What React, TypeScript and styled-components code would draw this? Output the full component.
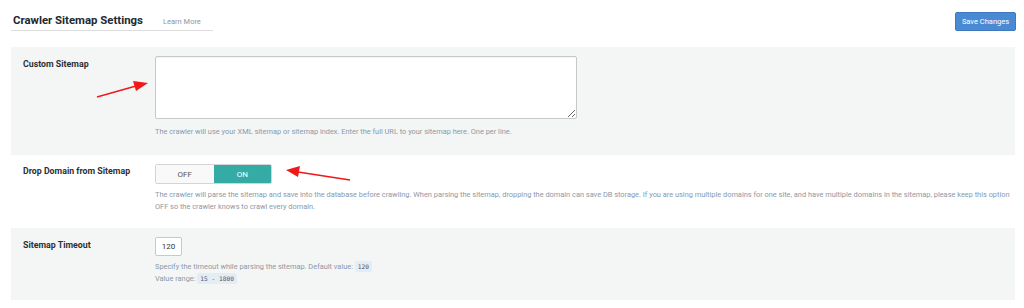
import * as React from "react";
import styled, { createGlobalStyle } from "styled-components";

const GlobalStyle = createGlobalStyle`
  body {
    margin: 0;
    background: #fff;
    font-family: Roboto, "Open Sans", sans-serif;
    color: #333;
  }
`;

export const Page = styled.div`
  width: 1024px;
  height: 308px;
  padding: 0 9px 0 11px;
  box-sizing: border-box;
  position: relative;
  overflow: hidden;
`;

export const Header = styled.div`
  display: flex;
  align-items: flex-end;
  justify-content: space-between;
  height: 31px;
`;

export const TitleBlock = styled.div`
  display: flex;
  align-items: baseline;
  gap: 20px;
  width: 202px;
  padding: 0 0 3px 2px;
  border-bottom: 1px solid #dcdcdc;
  box-sizing: border-box;
`;

export const Title = styled.h1`
  margin: 0;
  font-size: 11.4px;
  font-weight: 700;
  color: #23282d;
`;

export const LearnMore = styled.a`
  font-size: 7.5px;
  color: #8a99a8;
  text-decoration: none;
`;

export const SaveButton = styled.button`
  width: 61px;
  height: 19px;
  margin-right: -1px;
  background: #4a8ad4;
  border: 1px solid #3f78bb;
  border-radius: 2px;
  color: #fff;
  font-family: inherit;
  font-size: 7.5px;
  padding: 0;
`;

export const Table = styled.div`
  margin-top: 16px;
  display: flex;
  flex-direction: column;
`;

export const Row = styled.div<{ $striped?: boolean; $h: number }>`
  display: grid;
  grid-template-columns: 144px 1fr;
  height: ${(p) => p.$h}px;
  background: ${(p) => (p.$striped ? "#f4f6f6" : "#fff")};
  box-sizing: border-box;
`;

export const Label = styled.div<{ $top: number }>`
  padding: ${(p) => p.$top}px 0 0 12px;
  font-size: 8.8px;
  font-weight: 700;
  color: #2c3035;
`;

export const Field = styled.div<{ $top: number }>`
  padding-top: ${(p) => p.$top}px;
  display: flex;
  flex-direction: column;
  align-items: flex-start;
`;

export const TextArea = styled.textarea`
  width: 422px;
  height: 63px;
  box-sizing: border-box;
  border: 1px solid #c8c8c8;
  border-radius: 2px;
  background: #fff;
  box-shadow: inset 0 1px 1px rgba(0, 0, 0, 0.05);
  margin: 0;
`;

export const Desc = styled.p<{ $top: number }>`
  margin: ${(p) => p.$top}px 0 0;
  font-size: 7.4px;
  line-height: 12px;
  color: #8a99a8;
  white-space: nowrap;
`;

export const Toggle = styled.div`
  display: flex;
  width: 117px;
  height: 20px;
  border: 1px solid #d4d4d4;
  border-radius: 2px;
  overflow: hidden;
  box-sizing: border-box;
`;

export const ToggleOption = styled.div<{ $active?: boolean }>`
  flex: 1;
  display: flex;
  align-items: center;
  justify-content: center;
  font-size: 8px;
  color: ${(p) => (p.$active ? "#fff" : "#555")};
  background: ${(p) => (p.$active ? "#35aba5" : "#f9f9f9")};
`;

export const NumberInput = styled.input`
  width: 27px;
  height: 19px;
  box-sizing: border-box;
  border: 1px solid #c8c8c8;
  border-radius: 2px;
  font-family: inherit;
  font-size: 8px;
  color: #333;
  text-align: center;
  padding: 0;
  margin: 0;
`;

export const Code = styled.code`
  font-family: "DejaVu Sans Mono", monospace;
  font-size: 6.2px;
  color: #556;
  background: #e4ecf4;
  padding: 2px 3px;
  border-radius: 2px;
`;

export const Arrows = styled.svg`
  position: absolute;
  left: 0;
  top: 0;
  pointer-events: none;
`;

export default function App() {
  return (
    <Page>
      <GlobalStyle />
      <Header>
        <TitleBlock>
          <Title>Crawler Sitemap Settings</Title>
          <LearnMore href="#">Learn More</LearnMore>
        </TitleBlock>
        <SaveButton>Save Changes</SaveButton>
      </Header>
      <Table>
        <Row $striped $h={108}>
          <Label $top={12}>Custom Sitemap</Label>
          <Field $top={9}>
            <TextArea />
            <Desc $top={7}>
              The crawler will use your XML sitemap or sitemap index. Enter the full URL to your sitemap here. One per line.
            </Desc>
          </Field>
        </Row>
        <Row $h={73}>
          <Label $top={11}>Drop Domain from Sitemap</Label>
          <Field $top={9}>
            <Toggle>
              <ToggleOption>OFF</ToggleOption>
              <ToggleOption $active>ON</ToggleOption>
            </Toggle>
            <Desc $top={5}>
              The crawler will parse the sitemap and save into the database before crawling. When parsing the sitemap, dropping the domain can save DB storage. If you are using multiple domains for one site, and have multiple domains in the sitemap, please keep this option
              <br />
              OFF so the crawler knows to crawl every domain.
            </Desc>
          </Field>
        </Row>
        <Row $striped $h={72}>
          <Label $top={12}>Sitemap Timeout</Label>
          <Field $top={9}>
            <NumberInput defaultValue="120" />
            <Desc $top={5}>
              Specify the timeout while parsing the sitemap. Default value: <Code>120</Code>
              <br />
              Value range: <Code>15 - 1800</Code>
            </Desc>
          </Field>
        </Row>
      </Table>
      <Arrows width="1024" height="308" viewBox="0 0 1024 308">
        <line x1="97" y1="97" x2="136" y2="86" stroke="#f01818" strokeWidth="1.3" />
        <polygon points="148,83 133,81 136,91" fill="#f01818" />
        <line x1="350" y1="180" x2="298" y2="172" stroke="#f01818" strokeWidth="1.3" />
        <polygon points="286,170 300,166 298,177" fill="#f01818" />
      </Arrows>
    </Page>
  );
}
